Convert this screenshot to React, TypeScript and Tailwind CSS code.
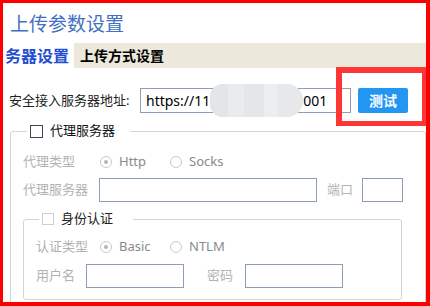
import React from "react";

const Radio = ({ checked, label, width }: { checked?: boolean; label: string; width?: string }) => (
  <div className={`flex items-center ${width ?? ""}`}>
    <span className="flex h-[12px] w-[12px] items-center justify-center rounded-full border border-[#cacaca] bg-white">
      {checked && <span className="h-[4px] w-[4px] rounded-full bg-[#b4b4b4]" />}
    </span>
    <span className="ml-[7px] text-[13px] text-[#8a8a8a]">{label}</span>
  </div>
);

const Box = ({ width }: { width: string }) => (
  <div className={`h-[24px] border border-[#8d9fb2] bg-white ${width}`} />
);

const App = () => {
  return (
    <div className="relative h-[306px] w-[430px] overflow-hidden border-b-[4px] border-l-[3px] border-r-[4px] border-t-[3px] border-[#ff0000] bg-white font-['Noto_Sans','Noto_Sans_CJK_SC',sans-serif]">
      {/* title */}
      <div className="h-[40px] pl-[7px] pt-[3px] text-[19px] leading-[37px] text-[#3f70c2]">上传参数设置</div>

      {/* tabs */}
      <div className="flex h-[25px] bg-[#ece8dc]">
        <div className="flex w-[71px] items-center bg-white pl-[2px] text-[16px] font-bold text-[#1f4fd0]">务器设置</div>
        <div className="flex items-center pl-[6px] text-[14px] font-bold text-black">上传方式设置</div>
      </div>

      {/* server address */}
      <div className="mt-[20px] flex h-[25px] items-center">
        <div className="w-[137px] pl-[6px] text-[13px] text-[#222]">安全接入服务器地址:</div>
        <div className="flex h-[25px] w-[211px] items-center border border-[#8d9fb2] pl-[5px] text-[14px] text-black">
          <span>https://11</span>
          <span className="relative -my-[4px] flex h-[33px] w-[93px] overflow-hidden rounded-l-[14px] rounded-r-[18px] bg-[#e6e8ea]">
            <span className="h-full w-[18px] bg-[#e3e5e7]" />
            <span className="h-full w-[16px] bg-[#e9ebec]" />
            <span className="h-full w-[20px] bg-[#e4e6e8]" />
            <span className="h-full w-[14px] bg-[#ebedee]" />
            <span className="h-full w-[25px] bg-[#e6e8ea]" />
          </span>
          <span>001</span>
        </div>
        <button className="ml-[7px] h-[25px] w-[50px] rounded-[2px] bg-[#2196f3] text-[14px] font-bold text-white">测试</button>
      </div>

      {/* proxy group */}
      <fieldset className="ml-[7px] mt-[8px] rounded-[3px] border border-[#d4d4d4] pb-[6px] pl-[12px] pt-[9px]">
        <legend className="ml-[4px] flex h-[20px] items-center pl-[3px] pr-[15px]">
          <span className="h-[13px] w-[13px] border border-[#3a4658] bg-white" />
          <span className="ml-[7px] text-[13px] text-[#111]">代理服务器</span>
        </legend>

        <div className="flex h-[24px] items-center">
          <div className="w-[77px] text-[13px] text-[#b2b2b2]">代理类型</div>
          <Radio checked label="Http" width="w-[70px]" />
          <Radio label="Socks" />
        </div>

        <div className="mt-[4px] flex h-[24px] items-center">
          <div className="w-[76px] text-[13px] text-[#b2b2b2]">代理服务器</div>
          <Box width="w-[218px]" />
          <div className="ml-[10px] text-[13px] text-[#b2b2b2]">端口</div>
          <div className="ml-[9px]">
            <Box width="w-[41px]" />
          </div>
        </div>

        {/* auth group */}
        <fieldset className="mr-[23px] mt-[7px] rounded-[3px] border border-[#d4d4d4] pb-[11px] pl-[12px] pt-[6px]">
          <legend className="ml-[3px] flex h-[20px] items-center pl-[3px] pr-[20px]">
            <span className="h-[12px] w-[12px] border border-[#cfcfcf] bg-white" />
            <span className="ml-[7px] text-[13px] text-[#222]">身份认证</span>
          </legend>

          <div className="flex h-[24px] items-center">
            <div className="w-[64px] text-[13px] text-[#b2b2b2]">认证类型</div>
            <Radio checked label="Basic" width="w-[70px]" />
            <Radio label="NTLM" />
          </div>

          <div className="mt-[5px] flex h-[24px] items-center">
            <div className="w-[50px] text-[13px] text-[#b2b2b2]">用户名</div>
            <Box width="w-[98px]" />
            <div className="ml-[23px] text-[13px] text-[#b2b2b2]">密码</div>
            <div className="ml-[12px]">
              <Box width="w-[98px]" />
            </div>
          </div>
        </fieldset>
      </fieldset>

      {/* highlight annotation */}
      <div className="absolute right-0 top-[64px] h-[59px] w-[90px] border-[6px] border-b-[5px] border-r-[4px] border-[#ff3636]" />
    </div>
  );
};

export default App;
